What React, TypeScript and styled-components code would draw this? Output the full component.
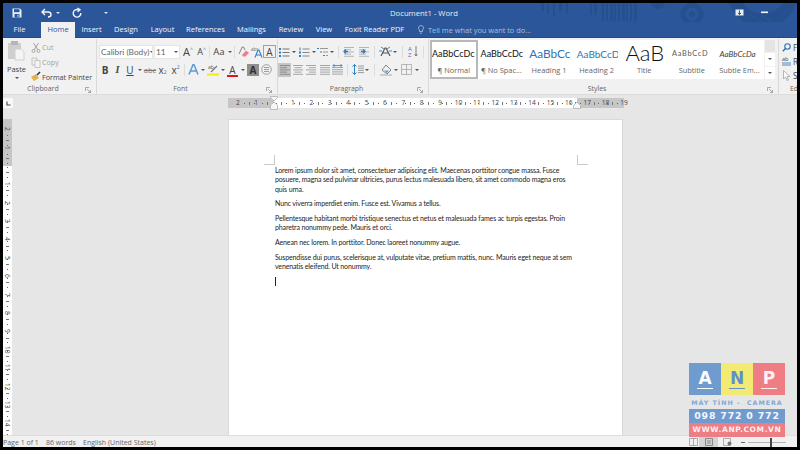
import React from "react";
import styled, { createGlobalStyle } from "styled-components";

const Global = createGlobalStyle`
  html, body { margin: 0; padding: 0; background: #000; }
  #root { width: 800px; height: 450px; overflow: hidden; }
  * { box-sizing: border-box; }
`;
const UI = `"Open Sans", "Noto Sans", "Liberation Sans", sans-serif`;
const DOC = `Lato, "Open Sans", sans-serif`;
const LOGO = `"DejaVu Sans", "Liberation Sans", sans-serif`;

const Frame = styled.div`
  position: relative; width: 800px; height: 450px; background: #000;
  padding: 3px 3px 3px 3px; display: flex; flex-direction: column; overflow: hidden;
  font-family: ${UI};
`;
const TitleBar = styled.header`
  position: relative; height: 19px; flex: none; background: #2b579a;
  display: flex; align-items: center; color: #fff; overflow: hidden;
`;
const TitleArt = styled.svg`position: absolute; left: 0; top: 0; width: 794px; height: 34px;`;
const Qat = styled.div`position: relative; display: flex; align-items: center; padding-left: 9px; width: 387px; flex: none;`;
const QatSlot = styled.span<{ $w: number }>`width: ${p => p.$w}px; display: flex; justify-content: center; flex: none;`;
const DocTitle = styled.div`position: relative; width: 67px; flex: none; font-size: 7.7px; white-space: nowrap; color: #e8eef7; text-align: center; padding-top: 1px;`;
const WinControls = styled.div`position: relative; display: flex; align-items: center; margin-left: 278px;`;

const TabBar = styled.nav`
  position: relative; height: 16px; flex: none; background: #2b579a; border-bottom: 1px solid #1e4a8c;
  display: flex; align-items: flex-start; color: #f2f5fa; font-size: 7.5px; padding-top: 0;
  overflow: visible; z-index: 1;
`;
const Tab = styled.div<{ $w: number; $on?: boolean }>`
  flex: none; width: ${p => p.$w}px; height: ${p => (p.$on ? 16 : 15)}px; line-height: 15px; text-align: center; white-space: nowrap;
  background: ${p => (p.$on ? "#f1f1f1" : "transparent")}; color: ${p => (p.$on ? "#2b579a" : "inherit")};
`;
const TellMe = styled.div`
  display: flex; align-items: center; gap: 4px; height: 15px; color: #a9bfdd; font-size: 7.4px; margin-left: 8px; white-space: nowrap;
`;

const Ribbon = styled.section`height: 57px; flex: none; background: #f1f1f1; display: flex; overflow: hidden; border-bottom: 1px solid #dcdcdc;`;
const Group = styled.div<{ $w: number; $last?: boolean }>`
  position: relative; flex: none; width: ${p => p.$w}px; height: 55px; margin-top: 1px;
  border-right: ${p => (p.$last ? "none" : "1px solid #d9d9d9")}; display: flex; flex-direction: column;
`;
const GroupBody = styled.div`height: 45px; flex: none; display: flex;`;
const GroupLabel = styled.div`
  height: 10px; line-height: 10px; font-size: 6.9px; color: #666; text-align: center; white-space: nowrap; flex: none; padding-right: 13px;
`;
const EditLabel = styled(GroupLabel)`text-align: left; padding: 0 0 0 11px;`;
const Launcher = styled.svg`position: absolute; right: 5px; bottom: 1px; width: 6px; height: 6px;`;

const PasteBtn = styled.div`width: 27px; flex: none; display: flex; flex-direction: column; align-items: center; padding: 1px 0 0 0; font-size: 7.5px; color: #444;`;
const PasteText = styled.span`margin-top: 3px; line-height: 10px;`;
const Caret = styled.span<{ $c?: string }>`width: 0; height: 0; border-left: 2px solid transparent; border-right: 2px solid transparent; border-top: 2px solid ${p => p.$c ?? "#555"}; display: inline-block;`;
const PasteCaret = styled(Caret)`margin-top: 3px;`;
const ClipList = styled.div`display: flex; flex-direction: column; padding: 1px 0 0 1px; gap: 0;`;
const ClipItem = styled.div<{ $off?: boolean }>`
  display: flex; align-items: center; gap: 1px; height: 15px; font-size: 7.2px; white-space: nowrap;
  color: ${p => (p.$off ? "#a3a3a3" : "#444")};
`;

const Rows = styled.div<{ $pl: number }>`display: flex; flex-direction: column; padding: 5px 0 0 ${p => p.$pl}px; gap: 3px;`;
const Row = styled.div`display: flex; align-items: center; height: 15px;`;
const FontBox = styled.div<{ $w: number }>`
  flex: none; width: ${p => p.$w}px; height: 14px; background: #fff; border: 1px solid #e4e4e4; margin-right: 1px; padding: 0 1px 0 1px;
  display: flex; align-items: center; justify-content: space-between; font-size: 8.3px; color: #666; font-family: ${DOC}; white-space: nowrap; overflow: hidden;
`;
const Cell = styled.div<{ $w: number; $on?: boolean; $boxed?: boolean; $fs?: number; $c?: string }>`
  flex: none; width: ${p => p.$w}px; height: ${p => (p.$boxed ? 13 : 14)}px; display: flex; align-items: center; justify-content: center; position: relative;
  font-size: ${p => p.$fs ?? 10}px; color: ${p => p.$c ?? "#444"}; line-height: 14px; white-space: nowrap;
  background: ${p => (p.$on ? "#c6c6c6" : "transparent")};
  border: ${p => (p.$boxed ? "1px solid #7fa6d4" : "none")};
`;
const Shaded = styled(Cell)`background: #8f8f8f; height: 12px; margin: 0 1px; color: #2f2f2f; font-weight: 700;`;
const Pilcrow = styled(Cell)`font-weight: 700;`;
const SerifI = styled.i`font-family: "Liberation Serif", serif; font-weight: 700;`;
const Script = styled.span<{ $up?: boolean }>`font-size: 5px; color: #2b79c2; line-height: 0; position: relative; top: ${p => (p.$up ? -3 : 2)}px;`;
const Sep = styled.span<{ $mx?: number }>`flex: none; width: 1px; height: 12px; background: #dcdcdc; margin: 0 ${p => p.$mx ?? 1}px;`;
const Under = styled.span<{ $c: string }>`position: absolute; left: 1px; right: 1px; bottom: 0; height: 2px; background: ${p => p.$c};`;

const Gallery = styled.div`display: flex; margin: 1px 0 0 1px; height: 39px; flex: none; width: 334px; background: #fff;`;
const StyleCard = styled.div<{ $on?: boolean }>`
  flex: none; width: 47.6px; height: 39px; display: flex; flex-direction: column; align-items: center; overflow: hidden; position: relative;
  border: 2px solid ${p => (p.$on ? "#b8b8b8" : "transparent")};
`;
const Sample = styled.div<{ $fs: number; $c?: string; $it?: boolean; $ls?: number; $fw?: number; $pl: number; $lh?: number }>`
  height: 22px; line-height: ${p => p.$lh ?? 24}px; width: 100%; text-align: left; padding-left: ${p => p.$pl}px; overflow: hidden; white-space: nowrap;
  font-family: ${DOC}; font-size: ${p => p.$fs}px; color: ${p => p.$c ?? "#111"}; font-weight: ${p => p.$fw ?? 400};
  font-style: ${p => (p.$it ? "italic" : "normal")}; letter-spacing: ${p => p.$ls ?? 0}px;
`;
const StyleName = styled.div`font-size: 7.4px; color: #666; line-height: 12px; white-space: nowrap;`;
const Scroller = styled.div`width: 10px; height: 39px; margin: 1px 0 0 1px; display: flex; flex-direction: column; gap: 1px; flex: none;`;
const ScrollBtn = styled.div<{ $off?: boolean }>`flex: 1; background: ${p => (p.$off ? "#e4e4e4" : "#fff")}; display: flex; align-items: center; justify-content: center;`;
const EditList = styled.div`display: flex; flex-direction: column; padding: 1px 0 0 3px;`;
const EditItem = styled.div`height: 14px; display: flex; align-items: center; gap: 2px; font-size: 8.1px; color: #444; white-space: nowrap;`;

const RulerRow = styled.div`position: relative; height: 24px; flex: none; background: #e6e6e6; display: flex; padding-top: 3px;`;
const TabStop = styled.div`width: 10px; height: 10px; background: #f8f8f8; flex: none; display: flex; align-items: center; justify-content: center;`;
const HRuler = styled.div`
  position: relative; margin-left: 215px; width: 396px; height: 10px; flex: none; display: flex; padding-left: 9.8px; font-size: 6.6px; color: #444;
  background: linear-gradient(to right, #c6c6c6 46px, #fff 46px, #fff 349px, #c6c6c6 349px);
`;
const RCell = styled.div`width: 18.4px; flex: none; display: flex; align-items: center; justify-content: space-between; padding: 0 1.5px;`;
const RNum = styled.span<{ $end?: boolean }>`
  width: 5px; text-align: center; line-height: 10px; white-space: nowrap; display: flex; justify-content: center;
  margin-${p => (p.$end ? "right: -4px" : "left: -4px")};
`;
const RDot = styled.span`width: 1px; height: 1px; background: #666; flex: none;`;
const RTick = styled.span`width: 1px; height: 3px; background: #777; flex: none;`;
const Marker = styled.svg<{ $x: number }>`position: absolute; left: ${p => p.$x}px; top: -2px; width: 8px; height: 14px;`;

const Workspace = styled.main`flex: 1; min-height: 0; background: #e6e6e6; display: flex; overflow: hidden;`;
const VRuler = styled.div`
  width: 9px; flex: none; height: 316px; display: flex; flex-direction: column; padding-top: 10px; color: #444; font-size: 6.6px; overflow: hidden;
  background: linear-gradient(to bottom, #c6c6c6 47px, #fff 47px);
`;
const VCell = styled.div`height: 18.4px; flex: none; display: flex; flex-direction: column; align-items: center; justify-content: space-between; padding: 1.5px 0;`;
const VNum = styled.span<{ $end?: boolean }>`
  writing-mode: vertical-rl; height: 5px; line-height: 9px; display: flex; justify-content: center; white-space: nowrap;
  margin-${p => (p.$end ? "bottom: -4px" : "top: -4px")};
`;
const VDot = styled.span`width: 1px; height: 1px; background: #666; flex: none;`;
const VTick = styled.span`width: 3px; height: 1px; background: #777; flex: none;`;
const Page = styled.article`
  position: relative; flex: none; margin: 0 0 0 216px; width: 395px; height: 340px; background: #fff;
  border: 1px solid #d9d9d9; padding: 46px 0 0 46px; font-family: ${DOC}; font-size: 7px; letter-spacing: -0.14px; color: #1c1c1c; line-height: 9.4px;
`;
const Para = styled.p`margin: 0 0 5.2px; white-space: nowrap;`;
const Cursor = styled.div`width: 1px; height: 9px; background: #222; margin-top: 2px;`;
const Crop = styled.span<{ $side: "l" | "r" }>`
  position: absolute; top: 35px; width: 11px; height: 10px; border-bottom: 1px solid #c9c9c9;
  ${p => (p.$side === "l" ? "left: 35px; border-right: 1px solid #c9c9c9;" : "left: 348px; border-left: 1px solid #c9c9c9;")}
`;

const StatusBar = styled.footer`
  position: relative; height: 12px; flex: none; background: #f1f1f1; border-top: 1px solid #dedede; display: flex; align-items: center; padding: 2px 0 0 0;
  font-size: 7px; color: #666; white-space: nowrap;
`;
const StatusText = styled.span<{ $w: number }>`width: ${p => p.$w}px; flex: none;`;
const StatusView = styled.div<{ $w: number; $on?: boolean }>`
  width: ${p => p.$w}px; height: 11px; margin-top: -2px; flex: none; display: flex; align-items: center; justify-content: center; background: ${p => (p.$on ? "#d4d4d4" : "transparent")};
`;
const ZoomMinus = styled.span`width: 4px; height: 1px; background: #666; margin-left: 4px; flex: none;`;
const Zoom = styled.div`position: relative; width: 38px; height: 1px; background: #b5b5b5; margin-left: 3px; flex: none;`;
const Thumb = styled.span`position: absolute; left: 22px; top: -4px; width: 2px; height: 9px; background: #444;`;

const Badge = styled.aside`position: absolute; left: 689px; top: 363px; width: 96px; display: flex; flex-direction: column; font-family: ${LOGO}; font-weight: 700;`;
const Tiles = styled.div`display: flex; height: 32px;`;
const TileBox = styled.div<{ $bg: string; $c: string }>`
  flex: 1; background: ${p => p.$bg}; color: ${p => p.$c}; font-size: 17px; display: flex; flex-direction: column; align-items: center; justify-content: center; line-height: 15px; padding-top: 2px;
`;
const TileBar = styled.span<{ $c: string }>`width: 16px; height: 1px; background: ${p => p.$c}; margin-top: 2px;`;
const Tagline = styled.div`height: 14px; line-height: 16px; color: #85a6d3; font-size: 6.3px; letter-spacing: 1px; text-align: center; white-space: pre;`;
const Phone = styled.div`height: 14px; line-height: 14px; background: #6f9bcf; color: #f4f7fb; font-size: 9.4px; letter-spacing: 0.8px; text-align: center; white-space: nowrap;`;
const Url = styled.div`height: 14px; line-height: 14px; background: #ee7d84; color: #fdeff0; font-size: 7.5px; letter-spacing: 0.6px; text-align: center; white-space: nowrap;`;
const Glyph = styled.svg`display: block; flex: none; overflow: visible;`;

const Ic = ({ w = 12, h = 12, children }: { w?: number; h?: number; children: React.ReactNode }) => (
  <Glyph width={w} height={h} viewBox={`0 0 ${w} ${h}`} fill="none">{children}</Glyph>
);
const Arrow = ({ w = 6 }: { w?: number }) => (
  <Cell $w={w}><Caret /></Cell>
);
const Lines = ({ x = 0, y = 1, n = 5, w = 11, c = "#8a8a8a", align = "l" }: { x?: number; y?: number; n?: number; w?: number; c?: string; align?: string }) => (
  <>
    {Array.from({ length: n }).map((_, i) => {
      const len = i % 2 === 0 ? w : align === "j" ? w : w - 3;
      const x0 = align === "c" ? x + (w - len) / 2 : align === "r" ? x + w - len : x;
      return <rect key={i} x={x0} y={y + i * 2.2} width={len} height="1" fill={c} />;
    })}
  </>
);
const Launch = () => (
  <Launcher viewBox="0 0 6 6" fill="none"><path d="M0.5 0.5H4M0.5 0.5V4M2 2L5.5 5.5M5.5 3V5.5H3" stroke="#8a8a8a" strokeWidth="0.7" /></Launcher>
);

const hNums = [1, 2, 3, 4, 5, 6, 7, 8, 9, 10, 11, 12, 13, 14, 15, 16, 17, 18, 19];
const vNums = [1, 2, 3, 4, 5, 6, 7, 8, 9, 10, 11, 12, 13, 14, 15];

const styles = [
  { s: "AaBbCcDc", n: "¶ Normal", fs: 9, on: true, pl: 0 },
  { s: "AaBbCcDc", n: "¶ No Spac...", fs: 9, pl: 1 },
  { s: "AaBbCc", n: "Heading 1", fs: 11.8, c: "#2e74b5", pl: 2 },
  { s: "AaBbCcD", n: "Heading 2", fs: 10, c: "#2e74b5", pl: 2 },
  { s: "AaB", n: "Title", fs: 22, fw: 300, pl: 3, lh: 22 },
  { s: "AaBbCcD", n: "Subtitle", fs: 7.4, c: "#595959", ls: 0.7, pl: 2 },
  { s: "AaBbCcDa", n: "Subtle Em...", fs: 8, c: "#404040", it: true, pl: 2 },
];

export default function App() {
  return (
    <Frame>
      <Global />
      <TitleBar>
        <TitleArt viewBox="0 0 794 34" fill="none">
          <g fill="#264f90">
            {[541, 547, 553, 559, 566, 590, 594, 602, 606, 610, 614, 618, 622, 626, 630, 634].map((x, i) => (
              <rect key={x} x={x - 3} y={-2} width={i % 3 === 0 ? 3 : 2} height={i < 5 ? 10 + (i % 3) * 3 : i < 7 ? 14 : 20} />
            ))}
            <circle cx="655" cy="-1" r="7" />
          </g>
          <circle cx="689" cy="11" r="9" stroke="#264f90" strokeWidth="5" />
          <circle cx="689" cy="11" r="3" fill="#264f90" />
          <circle cx="760" cy="-12" r="36" fill="#264f90" />
          <circle cx="760" cy="-12" r="23" fill="#2b579a" />
          <path d="M735 18 L752 24 M745 10 L765 24 M758 12 L775 22" stroke="#2b579a" strokeWidth="1" />
        </TitleArt>
        <Qat>
          <QatSlot $w={10}>
            <Ic w={10} h={10}>
              <path d="M0.5 0.5H8L9.5 2V9.5H0.5Z" fill="#e9eef6" />
              <rect x="2" y="1.2" width="5.5" height="3" fill="#2b579a" />
              <rect x="2.5" y="6" width="5" height="3.5" fill="#2b579a" />
              <rect x="5.5" y="6.7" width="1" height="2" fill="#e9eef6" />
            </Ic>
          </QatSlot>
          <QatSlot $w={19} />
          <QatSlot $w={10}>
            <Ic w={11} h={10}><path d="M4 1L1 4L4 7M1 4H7C9 4 10 5.2 10 6.5C10 8 9 9 7 9" stroke="#f2f5fa" strokeWidth="1.4" /></Ic>
          </QatSlot>
          <QatSlot $w={14}><Caret $c="#dfe6f1" /></QatSlot>
          <QatSlot $w={6} />
          <QatSlot $w={12}>
            <Ic w={10} h={10}><path d="M6.5 1.8A3.8 3.8 0 1 0 8.8 5M5.5 0L8 1.8L5.5 3.8" stroke="#f2f5fa" strokeWidth="1.4" /></Ic>
          </QatSlot>
          <QatSlot $w={18} />
          <QatSlot $w={10}><Caret $c="#dfe6f1" /></QatSlot>
        </Qat>
        <DocTitle>Document1 - Word</DocTitle>
        <WinControls>
          <Ic w={9} h={7}><rect x="0.5" y="0.5" width="8" height="6" fill="#e8eef7" /><path d="M4.5 1.5V5.5M3 4L4.5 5.5L6 4" stroke="#2b579a" strokeWidth="1" /></Ic>
          <Ic w={22} h={3}><rect x="17" y="0.5" width="7" height="1.6" fill="#f2f5fa" /></Ic>
        </WinControls>
      </TitleBar>

      <TabBar>
        <Tab $w={33}>File</Tab>
        <Tab $w={5} />
        <Tab $w={34} $on>Home</Tab>
        <Tab $w={33}>Insert</Tab>
        <Tab $w={36}>Design</Tab>
        <Tab $w={37}>Layout</Tab>
        <Tab $w={49}>References</Tab>
        <Tab $w={43}>Mailings</Tab>
        <Tab $w={36}>Review</Tab>
        <Tab $w={30}>View</Tab>
        <Tab $w={71}>Foxit Reader PDF</Tab>
        <TellMe>
          <Ic w={6} h={9}><path d="M3 0.5A2.5 2.5 0 0 1 4.5 5V6.5H1.5V5A2.5 2.5 0 0 1 3 0.5ZM2 8.2H4" stroke="#c3d2e6" strokeWidth="0.7" /></Ic>
          Tell me what you want to do...
        </TellMe>
      </TabBar>

      <Ribbon>
        <Group $w={94}>
          <GroupBody>
            <PasteBtn>
              <Ic w={19} h={21}>
                <rect x="1" y="3" width="13" height="16" fill="#cfcfcf" />
                <rect x="4" y="1" width="7" height="4" fill="#b5b5b5" />
                <path d="M8 9H14L17 12V20H8Z" fill="#f4f4f4" stroke="#c9c9c9" strokeWidth="0.8" />
              </Ic>
              <PasteText>Paste</PasteText>
              <PasteCaret />
            </PasteBtn>
            <ClipList>
              <ClipItem $off>
                <Ic w={10} h={11}><path d="M2.5 1L7 8M7.5 1L3 8" stroke="#9a9a9a" strokeWidth="0.9" /><circle cx="2.5" cy="9" r="1.5" stroke="#9a9a9a" strokeWidth="0.8" /><circle cx="7.5" cy="9" r="1.5" stroke="#9a9a9a" strokeWidth="0.8" /></Ic>
                Cut
              </ClipItem>
              <ClipItem $off>
                <Ic w={10} h={11}><path d="M1 1H6V8H1Z" fill="#eee" stroke="#bbb" strokeWidth="0.8" /><path d="M4 3.5H9V10.5H4Z" fill="#f4f4f4" stroke="#bbb" strokeWidth="0.8" /></Ic>
                Copy
              </ClipItem>
              <ClipItem>
                <Ic w={10} h={11}><path d="M0 6L5 3L8 7L3 10Z" fill="#e6b050" /><path d="M6 4L9 1" stroke="#333" strokeWidth="1.6" /></Ic>
                Format Painter
              </ClipItem>
            </ClipList>
          </GroupBody>
          <GroupLabel>Clipboard</GroupLabel>
          <Launch />
        </Group>

        <Group $w={181}>
          <GroupBody>
            <Rows $pl={2}>
              <Row>
                <FontBox $w={54}>Calibri (Body)<Caret /></FontBox>
                <FontBox $w={26}>11<Caret /></FontBox>
                <Cell $w={14} $fs={11}>A<Script $up>^</Script></Cell>
                <Cell $w={13} $fs={9}>A<Script $up>^</Script></Cell>
                <Sep />
                <Cell $w={16} $fs={9.5}>Aa</Cell>
                <Arrow w={5} />
                <Sep $mx={2} />
                <Cell $w={13}>
                  <Ic w={11} h={11}><path d="M1 8L4.2 1H5.5L7 4" stroke="#777" strokeWidth="0.9" /><path d="M4 9L8 4.5L11 7L7.5 10.5H5Z" fill="#ee7f8e" /></Ic>
                </Cell>
                <Cell $w={13}>
                  <Ic w={11} h={12}><text x="0" y="4.5" fontSize="4.5" fill="#666" fontFamily="Open Sans">abc</text><path d="M4 11.5L7 4H8L11 11.5M5.4 9H9.6" stroke="#2f7fc4" strokeWidth="1.1" /></Ic>
                </Cell>
                <Cell $w={13} $boxed $fs={10}>A</Cell>
              </Row>
              <Row>
                <Cell $w={12} $fs={10}><b>B</b></Cell>
                <Cell $w={13} $fs={10}><SerifI>I</SerifI></Cell>
                <Cell $w={12} $fs={10}><u>U</u></Cell>
                <Arrow w={8} />
                <Cell $w={12} $fs={7.5} $c="#777"><s>abc</s></Cell>
                <Cell $w={13} $fs={10}>x<Script>2</Script></Cell>
                <Cell $w={13} $fs={10}>x<Script $up>2</Script></Cell>
                <Sep $mx={2} />
                <Cell $w={13}>
                  <Ic w={11} h={11}><path d="M1 10.5L5 0.8H6L10 10.5M3 7H8" stroke="#5b9bd5" strokeWidth="1.5" /></Ic>
                </Cell>
                <Arrow w={6} />
                <Cell $w={14} $fs={6.5} $c="#666">
                  <Ic w={12} h={12}><text x="1" y="5" fontSize="5" fill="#555" fontFamily="Open Sans">ab</text><path d="M4 8L10 2" stroke="#777" strokeWidth="1.2" /><rect x="0" y="9.5" width="12" height="2" fill="#f6ea1e" /></Ic>
                </Cell>
                <Arrow w={6} />
                <Cell $w={13} $fs={10}>A<Under $c="#e0141c" /></Cell>
                <Arrow w={7} />
                <Shaded $w={12} $fs={10} $c="#2f2f2f">A</Shaded>
                <Cell $w={13}>
                  <Ic w={11} h={11}><circle cx="5.5" cy="5.5" r="4.8" stroke="#888" strokeWidth="0.8" /><path d="M3 3.5H8M3 5.5H8M3 7.5H8" stroke="#888" strokeWidth="0.8" /></Ic>
                </Cell>
              </Row>
            </Rows>
          </GroupBody>
          <GroupLabel>Font</GroupLabel>
          <Launch />
        </Group>

        <Group $w={151}>
          <GroupBody>
            <Rows $pl={0}>
              <Row>
                <Cell $w={13}>
                  <Ic w={11} h={10}><g fill="#2f7fc4"><rect x="0" y="1" width="2" height="2" /><rect x="0" y="4.5" width="2" height="2" /><rect x="0" y="8" width="2" height="2" /></g><g fill="#777"><rect x="3.5" y="1.5" width="7" height="1" /><rect x="3.5" y="5" width="7" height="1" /><rect x="3.5" y="8.5" width="7" height="1" /></g></Ic>
                </Cell>
                <Arrow w={6} />
                <Cell $w={14}>
                  <Ic w={11} h={10}><g fill="#2f7fc4"><rect x="0.5" y="0.5" width="1" height="3" /><rect x="0" y="4.5" width="2" height="2" /><rect x="0" y="8" width="2" height="2" /></g><g fill="#888"><rect x="3.5" y="1.5" width="7" height="1" /><rect x="3.5" y="5" width="7" height="1" /><rect x="3.5" y="8.5" width="7" height="1" /></g></Ic>
                </Cell>
                <Arrow w={5} />
                <Cell $w={13}>
                  <Ic w={12} h={10}><g fill="#2f7fc4"><rect x="0" y="1" width="2" height="1" /><rect x="3" y="4.5" width="2" height="1" /><rect x="6" y="8" width="2" height="1" /></g><g fill="#999"><rect x="3" y="1" width="8" height="1" /><rect x="6" y="4.5" width="5" height="1" /><rect x="9" y="8" width="2" height="1" /></g></Ic>
                </Cell>
                <Arrow w={6} />
                <Sep $mx={3} />
                <Cell $w={14}>
                  <Ic w={12} h={11}><Lines x={1} y={1} n={5} w={10} c="#b5b5b5" /><path d="M1 5.5L5 5.5M3 3.5L1 5.5L3 7.5" stroke="#2f7fc4" strokeWidth="1.3" /></Ic>
                </Cell>
                <Cell $w={15}>
                  <Ic w={12} h={11}><Lines x={1} y={1} n={5} w={10} c="#b5b5b5" /><path d="M3 5.5L7 5.5M5 3.5L7 5.5L5 7.5" stroke="#2f7fc4" strokeWidth="1.3" /></Ic>
                </Cell>
                <Sep $mx={3} />
                <Cell $w={14}>
                  <Ic w={13} h={11}><path d="M2 10L6 2H7L11 10M4 7H9" stroke="#555" strokeWidth="1.2" /><path d="M2 1L5 3M11 1L8 3M0 5H3M10 5H13" stroke="#2f7fc4" strokeWidth="0.9" /></Ic>
                </Cell>
                <Arrow w={6} />
                <Sep $mx={4} />
                <Cell $w={12}>
                  <Ic w={10} h={13}><text x="0" y="5.5" fontSize="6" fill="#2f7fc4" fontFamily="Open Sans">A</text><text x="0" y="12" fontSize="6" fill="#8d4aa8" fontFamily="Open Sans">Z</text><path d="M8 1V11M6.5 9L8 11L9.5 9" stroke="#666" strokeWidth="0.8" /></Ic>
                </Cell>
                <Sep $mx={4} />
                <Pilcrow $w={13} $fs={10.5} $c="#555">¶</Pilcrow>
              </Row>
              <Row>
                <Cell $w={13} $on>
                  <Ic w={10} h={11}><Lines x={0} y={1} n={5} w={10} c="#8c8c8c" /></Ic>
                </Cell>
                <Cell $w={13}><Ic w={10} h={11}><Lines x={0} y={1} n={5} w={10} c="#a5a5a5" align="c" /></Ic></Cell>
                <Cell $w={14}><Ic w={10} h={11}><Lines x={0} y={1} n={5} w={10} c="#a5a5a5" align="r" /></Ic></Cell>
                <Cell $w={13}><Ic w={10} h={11}><Lines x={0} y={1} n={5} w={10} c="#a5a5a5" align="j" /></Ic></Cell>
                <Cell $w={13}>
                  <Ic w={11} h={11}><Lines x={0} y={3} n={4} w={11} c="#a5a5a5" align="j" /><path d="M1 1.5H10M2.5 0L1 1.5L2.5 3M8.5 0L10 1.5L8.5 3" stroke="#2f7fc4" strokeWidth="0.8" /></Ic>
                </Cell>
                <Sep $mx={3} />
                <Cell $w={13}>
                  <Ic w={12} h={11}><path d="M2.5 0.5V10.5M0.5 2.5L2.5 0.5L4.5 2.5M0.5 8.5L2.5 10.5L4.5 8.5" stroke="#2f7fc4" strokeWidth="1" /><Lines x={6} y={1.5} n={4} w={6} c="#999" align="j" /></Ic>
                </Cell>
                <Arrow w={6} />
                <Sep $mx={4} />
                <Cell $w={14}>
                  <Ic w={12} h={12}><path d="M6 1L11 6L7 10L2 6Z" stroke="#777" strokeWidth="0.9" /><path d="M4 6.5H9L7 9Z" fill="#5ea3d9" /><rect x="0" y="10.5" width="12" height="1" fill="#aaa" /></Ic>
                </Cell>
                <Arrow w={6} />
                <Cell $w={14}>
                  <Ic w={11} h={11}><path d="M0.5 0.5H10.5V10.5H0.5ZM5.5 0.5V10.5M0.5 5.5H10.5" stroke="#a8a8a8" strokeWidth="0.8" /></Ic>
                </Cell>
                <Arrow w={7} />
              </Row>
            </Rows>
          </GroupBody>
          <GroupLabel>Paragraph</GroupLabel>
          <Launch />
        </Group>

        <Group $w={350}>
          <GroupBody>
            <Gallery>
              {styles.map(x => (
                <StyleCard key={x.n} $on={x.on}>
                  <Sample $fs={x.fs} $c={x.c} $it={x.it} $ls={x.ls} $fw={x.fw} $pl={x.pl} $lh={x.lh}>{x.s}</Sample>
                  <StyleName>{x.n}</StyleName>
                </StyleCard>
              ))}
            </Gallery>
            <Scroller>
              <ScrollBtn $off />
              <ScrollBtn><Caret /></ScrollBtn>
              <ScrollBtn><Caret /></ScrollBtn>
            </Scroller>
          </GroupBody>
          <GroupLabel>Styles</GroupLabel>
          <Launch />
        </Group>

        <Group $w={30} $last>
          <GroupBody>
            <EditList>
              <EditItem>
                <Ic w={9} h={9}><circle cx="5.5" cy="3.5" r="2.7" stroke="#2b6fb8" strokeWidth="1.1" /><path d="M3.5 5.5L0.8 8.3" stroke="#2b6fb8" strokeWidth="1.4" /></Ic>
                Find
              </EditItem>
              <EditItem>
                <Ic w={9} h={10}><text x="0" y="5" fontSize="5.5" fill="#444" fontFamily="Open Sans">ab</text><path d="M0 7H9M0 9H9" stroke="#2b6fb8" strokeWidth="0.8" /></Ic>
                Replace
              </EditItem>
              <EditItem>
                <Ic w={9} h={11}><path d="M1.5 0.5V9L3.5 7L5 10.5L6.5 10L5 6.5H8Z" fill="#fafafa" stroke="#999" strokeWidth="0.7" /></Ic>
                Select
              </EditItem>
            </EditList>
          </GroupBody>
          <EditLabel>Editing</EditLabel>
        </Group>
      </Ribbon>

      <RulerRow>
        <TabStop>
          <Ic w={5} h={5}><path d="M1 0.5V4H4.5" stroke="#444" strokeWidth="1.1" /></Ic>
        </TabStop>
        <HRuler>
          {[2, 1].map(n => (
            <RCell key={`l${n}`}>
              <RNum>{n}</RNum><RDot /><RTick /><RDot />
            </RCell>
          ))}
          {hNums.map(n => (
            <RCell key={n}>
              <RDot /><RTick /><RDot /><RNum $end>{n}</RNum>
            </RCell>
          ))}
          <Marker $x={42} viewBox="0 0 8 14" fill="none">
            <path d="M0.5 0.5H7.5V1.5L4 5L0.5 1.5ZM4 6L7.5 9V13.5H0.5V9Z" fill="#f7f7f7" stroke="#a8a8a8" strokeWidth="0.7" />
          </Marker>
          <Marker $x={345} viewBox="0 0 8 14" fill="none">
            <path d="M4 6L7.5 9.5V12.5H0.5V9.5Z" fill="#f7f7f7" stroke="#a8a8a8" strokeWidth="0.7" />
          </Marker>
        </HRuler>
      </RulerRow>

      <Workspace>
        <VRuler>
          {[2, 1].map(n => (
            <VCell key={`t${n}`}>
              <VNum>{n}</VNum><VDot /><VTick /><VDot />
            </VCell>
          ))}
          {vNums.map(n => (
            <VCell key={n}>
              <VDot /><VTick /><VDot /><VNum $end>{n}</VNum>
            </VCell>
          ))}
        </VRuler>
        <Page>
          <Crop $side="l" />
          <Crop $side="r" />
          <Para>Lorem ipsum dolor sit amet, consectetuer adipiscing elit. Maecenas porttitor congue massa. Fusce<br />posuere, magna sed pulvinar ultricies, purus lectus malesuada libero, sit amet commodo magna eros<br />quis urna.</Para>
          <Para>Nunc viverra imperdiet enim. Fusce est. Vivamus a tellus.</Para>
          <Para>Pellentesque habitant morbi tristique senectus et netus et malesuada fames ac turpis egestas. Proin<br />pharetra nonummy pede. Mauris et orci.</Para>
          <Para>Aenean nec lorem. In porttitor. Donec laoreet nonummy augue.</Para>
          <Para>Suspendisse dui purus, scelerisque at, vulputate vitae, pretium mattis, nunc. Mauris eget neque at sem<br />venenatis eleifend. Ut nonummy.</Para>
          <Cursor />
        </Page>
      </Workspace>

      <StatusBar>
        <StatusText $w={43}>Page 1 of 1</StatusText>
        <StatusText $w={37}>86 words</StatusText>
        <StatusText $w={605}>English (United States)</StatusText>
        <StatusView $w={11}>
          <Ic w={9} h={8}><path d="M0.5 0.5H8.5V7.5H0.5ZM4.5 0.5V7.5" stroke="#999" strokeWidth="0.8" /></Ic>
        </StatusView>
        <StatusView $w={19} $on>
          <Ic w={8} h={8}><path d="M0.5 0.5H7.5V7.5H0.5ZM2 3H6M2 5H6" stroke="#777" strokeWidth="0.8" /></Ic>
        </StatusView>
        <StatusView $w={19}>
          <Ic w={9} h={8}><path d="M0.5 0.5H7.5V7.5H0.5Z" stroke="#999" strokeWidth="0.8" /><circle cx="6.5" cy="5.5" r="2" fill="#777" /></Ic>
        </StatusView>
        <ZoomMinus />
        <Zoom><Thumb /></Zoom>
      </StatusBar>

      <Badge>
        <Tiles>
          <TileBox $bg="#6f9bcf" $c="#fbfcfe">A<TileBar $c="#fbfcfe" /></TileBox>
          <TileBox $bg="#f3ea74" $c="#5f8fd0">N<TileBar $c="#5f8fd0" /></TileBox>
          <TileBox $bg="#ee7d84" $c="#fdf1f2">P<TileBar $c="#fdf1f2" /></TileBox>
        </Tiles>
        <Tagline>MÁY TÍNH -  CAMERA</Tagline>
        <Phone>098 772 0 772</Phone>
        <Url>WWW.ANP.COM.VN</Url>
      </Badge>
    </Frame>
  );
}
